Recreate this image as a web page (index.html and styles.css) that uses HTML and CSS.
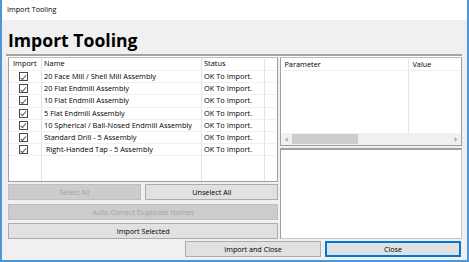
FILE: index.html
```html
<!DOCTYPE html>
<html>
<head>
<meta charset="utf-8">
<link rel="stylesheet" href="styles.css">
</head>
<body>
<div class="window">
  <div class="titlebar">Import Tooling</div>
  <div class="content">
    <h1 class="heading">Import Tooling</h1>
    <div class="separator"></div>
    <div class="main">
      <div class="left">
        <div class="list">
          <div class="row head">
            <div class="c c-imp">Import</div>
            <div class="c c-name">Name</div>
            <div class="c c-status">Status</div>
            <div class="c c-rest"></div>
          </div>
          <div class="row"><div class="c c-imp"><span class="cb"></span></div><div class="c c-name">20 Face Mill / Shell Mill Assembly</div><div class="c c-status">OK To Import.</div><div class="c c-rest"></div></div>
          <div class="row"><div class="c c-imp"><span class="cb"></span></div><div class="c c-name">20 Flat Endmill Assembly</div><div class="c c-status">OK To Import.</div><div class="c c-rest"></div></div>
          <div class="row"><div class="c c-imp"><span class="cb"></span></div><div class="c c-name">10 Flat Endmill Assembly</div><div class="c c-status">OK To Import.</div><div class="c c-rest"></div></div>
          <div class="row"><div class="c c-imp"><span class="cb"></span></div><div class="c c-name">5 Flat Endmill Assembly</div><div class="c c-status">OK To Import.</div><div class="c c-rest"></div></div>
          <div class="row"><div class="c c-imp"><span class="cb"></span></div><div class="c c-name">10 Spherical / Ball-Nosed Endmill Assembly</div><div class="c c-status">OK To Import.</div><div class="c c-rest"></div></div>
          <div class="row"><div class="c c-imp"><span class="cb"></span></div><div class="c c-name">Standard Drill - 5 Assembly</div><div class="c c-status">OK To Import.</div><div class="c c-rest"></div></div>
          <div class="row"><div class="c c-imp"><span class="cb"></span></div><div class="c c-name">&nbsp;Right-Handed Tap - 5 Assembly</div><div class="c c-status">OK To Import.</div><div class="c c-rest"></div></div>
          <div class="row fill"><div class="c c-imp"></div><div class="c c-name"></div><div class="c c-status"></div><div class="c c-rest"></div></div>
        </div>
        <div class="btn-row">
          <button class="btn disabled">Select All</button>
          <button class="btn">Unselect All</button>
        </div>
        <button class="btn disabled wide auto">Auto Correct Duplicate Names</button>
        <button class="btn wide import">Import Selected</button>
      </div>
      <div class="right">
        <div class="params">
          <div class="prow head">
            <div class="p p-name">Parameter</div>
            <div class="p p-val">Value</div>
          </div>
          <div class="prow fill">
            <div class="p p-name"></div>
            <div class="p p-val"></div>
          </div>
          <div class="hscroll">
            <span class="arrow">&lsaquo;</span>
            <div class="track"><div class="thumb"></div></div>
            <span class="arrow">&rsaquo;</span>
          </div>
        </div>
        <div class="desc"></div>
      </div>
    </div>
    <div class="bottom">
      <button class="btn">Import and Close</button>
      <button class="btn default">Close</button>
    </div>
  </div>
</div>
</body>
</html>
```
FILE: styles.css
```css
* { box-sizing: border-box; }
html, body { margin: 0; padding: 0; }
body {
  width: 469px;
  height: 262px;
  overflow: hidden;
  font-family: "Open Sans", "Noto Sans", sans-serif;
  font-size: 7.4px;
  color: #000;
  background: #fff;
}
.window {
  width: 469px;
  height: 262px;
  border: solid #4a97dc;
  border-width: 0 2px 2px 2px;
  display: flex;
  flex-direction: column;
  background: #f0f0f0;
}
.titlebar {
  height: 20px;
  background: #fff;
  padding-left: 5px;
  line-height: 19px;
  font-size: 7.2px;
}
.content {
  flex: 1;
  padding: 0 5px 0 3px;
  display: flex;
  flex-direction: column;
}
.heading {
  margin: 0;
  height: 34px;
  padding: 9px 0 0 3px;
  font-size: 17.6px;
  line-height: 22px;
  font-weight: 700;
  font-family: "Open Sans", "Noto Sans", sans-serif;
  letter-spacing: 0;
}
.separator {
  height: 3px;
  margin-left: 1px;
  border-top: 2px solid #a3a3a3;
  border-bottom: 1px solid #fff;
}
.main {
  display: flex;
  gap: 2px;
  padding-left: 3px;
}
.left {
  width: 271px;
  display: flex;
  flex-direction: column;
}
.list {
  height: 125px;
  background: #fff;
  border: 1px solid #a0a0a0;
  border-top: 1px solid #bdbdbd;
  display: flex;
  flex-direction: column;
  overflow: hidden;
}
.row {
  display: flex;
  height: 12.2px;
  border-bottom: 1px solid #f0f0f0;
  flex: none;
}
.row.head { height: 13px; }
.row.fill { flex: 1; border-bottom: none; }
.c {
  border-right: 1px solid #e3e3e3;
  padding-left: 2px;
  line-height: 11.5px;
  white-space: nowrap;
  overflow: hidden;
}
.c-imp { width: 33px; padding-left: 4px; }
.row:not(.head) .c-imp { display: flex; align-items: center; justify-content: center; padding: 0 4px 0 0; }
.c-name { width: 160px; }
.c-status { width: 63px; }
.c-rest { flex: 1; border-right: none; }
.cb {
  position: relative;
  width: 9px;
  height: 9px;
  border: 1px solid #4a4a4a;
  background: #fff;
}
.cb::after {
  content: "";
  position: absolute;
  left: 2.5px;
  top: 0.5px;
  width: 2px;
  height: 4.5px;
  border: solid #555;
  border-width: 0 0.8px 0.8px 0;
  transform: rotate(40deg);
}
.btn {
  font-family: "Open Sans", "Noto Sans", sans-serif;
  font-size: 7.2px;
  height: 16px;
  padding: 0;
  margin: 0;
  background: #e1e1e1;
  border: 1px solid #adadad;
  color: #000;
  line-height: 13px;
}
.btn.disabled {
  background: #cccccc;
  border-color: #bfbfbf;
  color: #a3a3a3;
}
.btn-row {
  display: flex;
  gap: 4px;
  margin-top: 2px;
}
.btn-row .btn { flex: 1; }
.wide { width: 100%; }
.auto { margin-top: 4px; }
.import { margin-top: 3px; }
.right {
  width: 182px;
  display: flex;
  flex-direction: column;
  gap: 2px;
}
.params {
  height: 89px;
  background: #fff;
  border: 1px solid #a0a0a0;
  border-top: 1px solid #bdbdbd;
  display: flex;
  flex-direction: column;
}
.prow { display: flex; }
.prow.head { height: 13px; border-bottom: 1px solid #f0f0f0; }
.prow.fill { flex: 1; }
.p { line-height: 12px; padding-left: 3px; }
.p-name { width: 128px; border-right: 1px solid #e8e8e8; }
.p-val { flex: 1; }
.hscroll {
  height: 12px;
  background: #f0f0f0;
  display: flex;
  align-items: center;
}
.arrow {
  width: 11px;
  text-align: center;
  font-size: 9px;
  line-height: 10px;
  color: #606060;
  font-family: "DejaVu Sans", sans-serif;
}
.track { flex: 1; height: 100%; padding: 1px 0; }
.thumb { width: 66px; height: 100%; background: #cdcdcd; }
.desc {
  height: 91px;
  background: #fff;
  border: 1px solid #c8c8c8;
  border-top: 2px solid #a0a0a0;
  border-left: 1px solid #a0a0a0;
}
.bottom {
  display: flex;
  justify-content: flex-end;
  gap: 4px;
  margin-top: 2px;
  padding-right: 1px;
}
.bottom .btn { width: 136px; }
.btn.default {
  border: 2px solid #0078d7;
  line-height: 11px;
}
```
